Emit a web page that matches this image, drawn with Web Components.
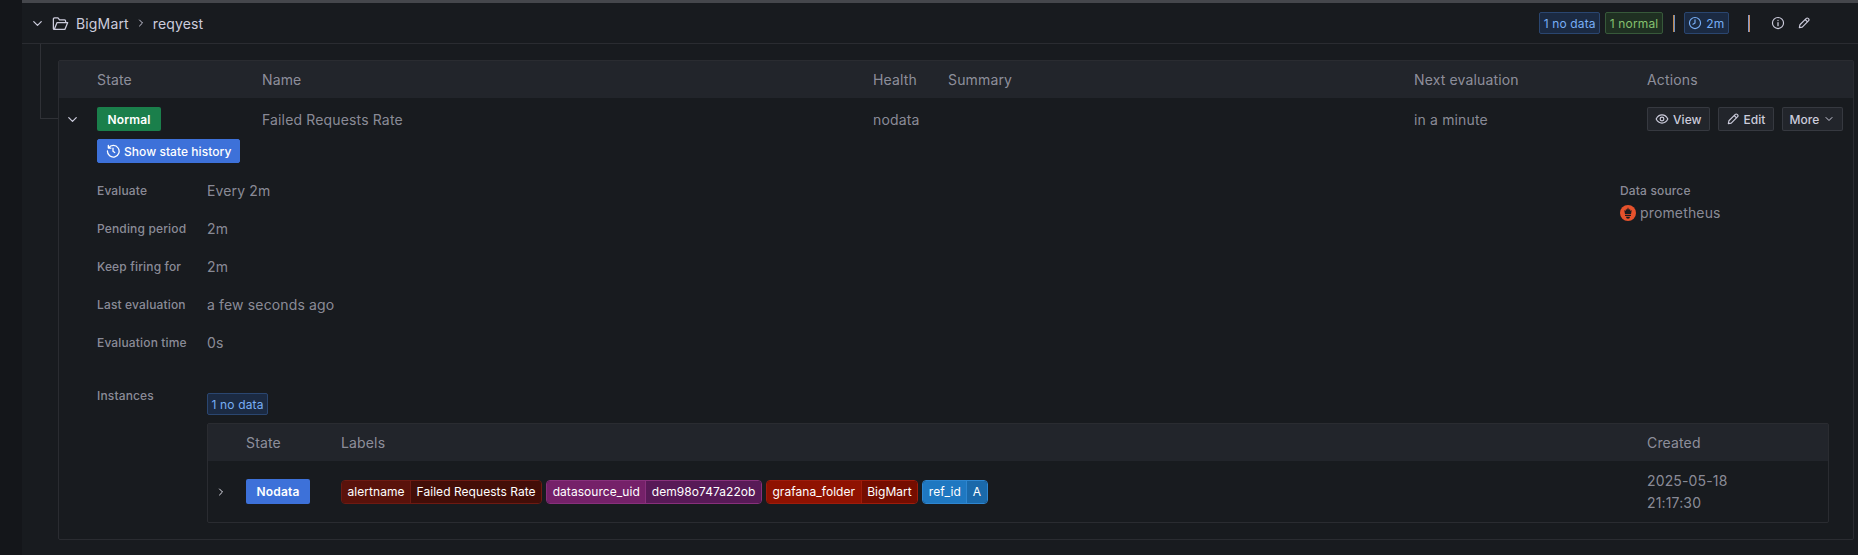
<!DOCTYPE html>
<html>
<head>
<meta charset="utf-8">
<style>
html, body { margin: 0; height: 100%; overflow: hidden; }
body {
    background: #14161a;
    color: #ccccdc;
    font-family: Inter, "Noto Sans", sans-serif;
    font-size: 14px;
    letter-spacing: 0.15px;
}
</style>
</head>
<body>

<alert-page>
    <group-header slot="header" folder="BigMart" group="reqyest"></group-header>
    <rule-table></rule-table>
</alert-page>

<script>
// small set of icons used around the page
const ICONS = {
    down: '<path d="M6 9l6 6 6-6" fill="none" stroke="currentColor" stroke-width="2" stroke-linecap="round" stroke-linejoin="round"/>',
    right: '<path d="M9 6l6 6-6 6" fill="none" stroke="currentColor" stroke-width="2" stroke-linecap="round" stroke-linejoin="round"/>',
    folder: '<path d="M3 18.500V6.500A1.500 1.500 0 0 1 4.500 5h4.300l2 2.500h6.200A1.500 1.500 0 0 1 18.500 9v2M3 18.500c0 .6.500 1 1 1h13.500l3.500-8.500H7.500L4.500 18.500" fill="none" stroke="currentColor" stroke-width="1.600" stroke-linejoin="round" stroke-linecap="round"/>',
    clock: '<circle cx="12" cy="12" r="9.500" fill="none" stroke="currentColor" stroke-width="2"/><path d="M12 6.500V12l-3.500 2" fill="none" stroke="currentColor" stroke-width="2" stroke-linecap="round" stroke-linejoin="round"/>',
    info: '<circle cx="12" cy="12" r="9.500" fill="none" stroke="currentColor" stroke-width="2"/><path d="M12 11.500v5M12 7.500v.4" fill="none" stroke="currentColor" stroke-width="2.200" stroke-linecap="round"/>',
    pen: '<path d="M4 20l1-5L16 4a2.100 2.100 0 0 1 3 0l1 1a2.100 2.100 0 0 1 0 3L9 19l-5 1zM14 6l4 4" fill="none" stroke="currentColor" stroke-width="2" stroke-linejoin="round" stroke-linecap="round"/>',
    eye: '<path d="M2 12s3.600-7 10-7 10 7 10 7-3.600 7-10 7S2 12 2 12z" fill="none" stroke="currentColor" stroke-width="2" stroke-linejoin="round"/><circle cx="12" cy="12" r="3.200" fill="none" stroke="currentColor" stroke-width="2"/>',
    history: '<path d="M4.500 6.500A10 10 0 1 1 2.500 12M4 2.500v4.500h4.500" fill="none" stroke="currentColor" stroke-width="2.200" stroke-linecap="round" stroke-linejoin="round"/><path d="M12 7v5.500l3 2" fill="none" stroke="currentColor" stroke-width="2.200" stroke-linecap="round" stroke-linejoin="round"/>'
};

class UiIcon extends HTMLElement {
    constructor() {
        super();
        this.attachShadow({ mode: 'open' });
    }
    connectedCallback() {
        const size = this.getAttribute('size') || 16;
        this.shadowRoot.innerHTML = `
        <style>
            :host { display: inline-flex; flex: none; }
            svg { display: block; }
        </style>
        <svg width="${size}" height="${size}" viewBox="0 0 24 24">${ICONS[this.getAttribute('name')] || ''}</svg>`;
    }
}
customElements.define('ui-icon', UiIcon);

class CountBadge extends HTMLElement {
    constructor() {
        super();
        this.attachShadow({ mode: 'open' }).innerHTML = `
        <style>
            :host {
                display: inline-flex;
                align-items: center;
                gap: 4px;
                height: 22px;
                box-sizing: border-box;
                padding: 0 3.500px;
                border-radius: 2px;
                font-size: 12px;
                border: 1px solid #2a4670;
                background: #1b2a42;
                color: #78aef5;
            }
            :host([tone="green"]) {
                border-color: #37593a;
                background: #1f3022;
                color: #86c06f;
            }
        </style>
        <slot></slot>`;
    }
}
customElements.define('count-badge', CountBadge);

class StateTag extends HTMLElement {
    constructor() {
        super();
        this.attachShadow({ mode: 'open' }).innerHTML = `
        <style>
            :host {
                display: inline-flex;
                align-items: center;
                justify-content: center;
                height: 24px;
                width: 64px;
                border-radius: 2px;
                font-size: 12px;
                font-weight: 600;
                color: #fff;
                background: #3d71d9;
            }
            :host([tone="green"]) { background: #1a7f4b; }
            :host([tall]) { height: 25px; }
        </style>
        <slot></slot>`;
    }
}
customElements.define('state-tag', StateTag);

class ActionButton extends HTMLElement {
    constructor() {
        super();
        this.attachShadow({ mode: 'open' }).innerHTML = `
        <style>
            :host {
                display: inline-flex;
                align-items: center;
                gap: 4px;
                height: 24px;
                box-sizing: border-box;
                padding: 0 7px;
                border-radius: 2px;
                font-size: 12px;
                font-weight: 500;
                letter-spacing: 0.05px;
                color: #ccccdc;
                background: #22252b;
                border: 1px solid rgba(204, 204, 220, 0.12);
            }
            :host([primary]) {
                padding: 0 8px;
                background: #3d71d9;
                border-color: #3d71d9;
                color: #fff;
            }
        </style>
        <slot></slot>`;
    }
}
customElements.define('action-button', ActionButton);

class LabelBadge extends HTMLElement {
    constructor() {
        super();
        this.attachShadow({ mode: 'open' });
    }
    connectedCallback() {
        const bg = this.getAttribute('bg');
        const bg2 = this.getAttribute('bg2');
        const edge = this.getAttribute('edge');
        this.shadowRoot.innerHTML = `
        <style>
            :host {
                display: inline-flex;
                height: 24px;
                box-sizing: border-box;
                border-radius: 4px;
                font-size: 12px;
                letter-spacing: 0.05px;
                color: #fff;
                overflow: hidden;
                border: 1px solid ${edge};
            }
            span {
                display: flex;
                align-items: center;
                padding: 0 5.500px;
                white-space: nowrap;
            }
            .key { background: ${bg}; }
            .val { background: ${bg2}; border-left: 1px solid ${edge}; }
        </style>
        <span class="key">${this.getAttribute('name')}</span><span class="val">${this.getAttribute('value')}</span>`;
    }
}
customElements.define('label-badge', LabelBadge);

class GroupHeader extends HTMLElement {
    constructor() {
        super();
        this.attachShadow({ mode: 'open' });
    }
    connectedCallback() {
        this.shadowRoot.innerHTML = `
        <style>
            :host {
                display: flex;
                align-items: center;
                height: 40px;
                padding-left: 8px;
                border-bottom: 1px solid #2a2c31;
                color: #ccccdc;
            }
            .chev { margin-right: 6px; }
            .crumb { margin-left: 6px; }
            .sep { margin: 0 6px; }
            .right { margin-left: auto; display: flex; align-items: center; }
            .rule { width: 2px; height: 17px; margin: 0 9px 0 10px; background: linear-gradient(90deg, #c08a50 50%, #6f8fc0 50%); }
            .rule.second { margin: 0 21px 0 19px; background: linear-gradient(90deg, #7f9cd0 50%, #c98a60 50%); }
            .gap { width: 5px; }
            .tools { display: flex; gap: 12px; margin-right: 47px; }
        </style>
        <ui-icon class="chev" name="down" size="15"></ui-icon>
        <ui-icon name="folder" size="19"></ui-icon>
        <span class="crumb">${this.getAttribute('folder')}</span>
        <ui-icon class="sep" name="right" size="12"></ui-icon>
        <span>${this.getAttribute('group')}</span>
        <div class="right">
            <count-badge>1 no data</count-badge>
            <div class="gap"></div>
            <count-badge tone="green">1 normal</count-badge>
            <div class="rule"></div>
            <count-badge><ui-icon name="clock" size="14"></ui-icon>2m</count-badge>
            <div class="rule second"></div>
            <div class="tools">
                <ui-icon name="info" size="14"></ui-icon>
                <ui-icon name="pen" size="14"></ui-icon>
            </div>
        </div>`;
    }
}
customElements.define('group-header', GroupHeader);

class DetailRow extends HTMLElement {
    constructor() {
        super();
        this.attachShadow({ mode: 'open' }).innerHTML = `
        <style>
            :host {
                display: grid;
                grid-template-columns: 110px 1fr;
                height: 38px;
                align-items: center;
                color: rgba(204, 204, 220, 0.65);
            }
            .k { font-size: 12px; font-weight: 500; }
        </style>
        <div class="k"><slot name="key"></slot></div>
        <div><slot></slot></div>`;
    }
}
customElements.define('detail-row', DetailRow);

class InstanceTable extends HTMLElement {
    constructor() {
        super();
        this.attachShadow({ mode: 'open' }).innerHTML = `
        <style>
            :host {
                display: block;
                border: 1px solid #2a2c31;
                border-radius: 2px;
            }
            .grid { display: grid; grid-template-columns: 38px 95px 1306px 1fr; }
            .head {
                height: 37px;
                align-items: center;
                background: #22252b;
                color: rgba(204, 204, 220, 0.65);
            }
            .row { height: 61px; align-items: center; }
            .toggle { display: flex; justify-content: center; padding-right: 12px; color: #e4e4ee; }
            .labels { display: flex; gap: 4px; align-items: center; }
            .state { display: flex; }
            .date { line-height: 22px; color: rgba(204, 204, 220, 0.65); }
        </style>
        <div class="grid head">
            <div></div><div>State</div><div>Labels</div><div>Created</div>
        </div>
        <div class="grid row">
            <div class="toggle"><ui-icon name="right" size="12"></ui-icon></div>
            <div class="state"><state-tag tall>Nodata</state-tag></div>
            <div class="labels">
                <label-badge name="alertname" value="Failed Requests Rate" bg="#5a120b" bg2="#430e08" edge="#6e1a12"></label-badge>
                <label-badge name="datasource_uid" value="dem98o747a22ob" bg="#752169" bg2="#581a57" edge="#88307c"></label-badge>
                <label-badge name="grafana_folder" value="BigMart" bg="#8f1201" bg2="#750d00" edge="#9e1c0b"></label-badge>
                <label-badge name="ref_id" value="A" bg="#1f78c1" bg2="#1a69aa" edge="#2e86d0"></label-badge>
            </div>
            <div class="date">2025-05-18<br>21:17:30</div>
        </div>`;
    }
}
customElements.define('instance-table', InstanceTable);

class RuleTable extends HTMLElement {
    constructor() {
        super();
        this.attachShadow({ mode: 'open' }).innerHTML = `
        <style>
            :host {
                display: block;
                flex: 1;
                min-width: 0;
                height: 480px;
                box-sizing: border-box;
                border: 1px solid #2a2c31;
                border-radius: 2px;
            }
            .grid { display: grid; grid-template-columns: 38px 165px 611px 75px 466px 233px 1fr; }
            .head {
                height: 37px;
                align-items: center;
                background: #22252b;
                color: rgba(204, 204, 220, 0.65);
            }
            .row { padding-top: 9px; color: rgba(204, 204, 220, 0.65); }
            .row > div { height: 24px; display: flex; align-items: center; }
            .row > .toggle { justify-content: center; padding-right: 12px; color: #ccccdc; }
            .row > .actions { gap: 8px; }
            .body { padding: 8px 8px 0 38px; }
            .meta { display: flex; justify-content: space-between; margin-top: 8px; }
            .source { width: 225px; padding-top: 12px; font-size: 12px; font-weight: 500; color: rgba(204, 204, 220, 0.65); }
            .source .ds { display: flex; align-items: center; gap: 4px; margin-top: 6px; font-size: 14px; font-weight: 400; }
            .source svg { display: block; }
            .inst { margin-top: 26px; display: flex; }
            .inst-k { width: 110px; font-size: 12px; font-weight: 500; color: rgba(204, 204, 220, 0.65); padding-top: 1px; }
            .inst-v { flex: 1; min-width: 0; margin-right: 16px; padding-top: 6px; }
            .inst-v count-badge { margin-bottom: 8px; }
        </style>
        <div class="grid head">
            <div></div><div>State</div><div>Name</div><div>Health</div><div>Summary</div><div>Next evaluation</div><div>Actions</div>
        </div>
        <div class="grid row">
            <div class="toggle"><ui-icon name="down" size="15"></ui-icon></div>
            <div><state-tag tone="green">Normal</state-tag></div>
            <div>Failed Requests Rate</div>
            <div>nodata</div>
            <div></div>
            <div>in a minute</div>
            <div class="actions">
                <action-button><ui-icon name="eye" size="14"></ui-icon>View</action-button>
                <action-button><ui-icon name="pen" size="14"></ui-icon>Edit</action-button>
                <action-button>More<ui-icon name="down" size="12"></ui-icon></action-button>
            </div>
        </div>
        <div class="body">
            <action-button primary><ui-icon name="history" size="14"></ui-icon>Show state history</action-button>
            <div class="meta">
                <div style="flex:1">
                    <detail-row><span slot="key">Evaluate</span>Every 2m</detail-row>
                    <detail-row><span slot="key">Pending period</span>2m</detail-row>
                    <detail-row><span slot="key">Keep firing for</span>2m</detail-row>
                    <detail-row><span slot="key">Last evaluation</span>a few seconds ago</detail-row>
                    <detail-row><span slot="key">Evaluation time</span>0s</detail-row>
                </div>
                <div class="source">
                    Data source
                    <div class="ds">
                        <svg width="16" height="16" viewBox="0 0 16 16"><circle cx="8" cy="8" r="8" fill="#e6522c"/><path d="M4.300 5L5.600 6 6 3.800 7 5 8 2.200 9 5 10 3.800 10.400 6 11.700 5 11 9.200H5zM5 10h6v1.100H5zM6 11.800h4a2 2 0 0 1-4 0z" fill="#181b1f"/></svg>
                        prometheus
                    </div>
                </div>
            </div>
            <div class="inst">
                <div class="inst-k">Instances</div>
                <div class="inst-v">
                    <count-badge>1 no data</count-badge>
                    <instance-table></instance-table>
                </div>
            </div>
        </div>`;
    }
}
customElements.define('rule-table', RuleTable);

class AlertPage extends HTMLElement {
    constructor() {
        super();
        this.attachShadow({ mode: 'open' }).innerHTML = `
        <style>
            :host {
                display: block;
                margin-left: 22px;
                height: 555px;
                background: #181b1f;
                overflow: hidden;
                border-top: 3px solid #45474c;
                box-sizing: border-box;
            }
            .tree { display: flex; padding-right: 4px; margin-top: 16px; padding-left: 18px; }
            .link {
                flex: none;
                box-sizing: border-box;
                width: 18px;
                height: 75px;
                margin-top: -16px;
                border-left: 1px solid #2f3136;
                border-bottom: 1px solid #2f3136;
            }
        </style>
        <slot name="header"></slot>
        <div class="tree">
            <div class="link"></div>
            <slot></slot>
        </div>`;
    }
}
customElements.define('alert-page', AlertPage);
</script>
</body>
</html>
